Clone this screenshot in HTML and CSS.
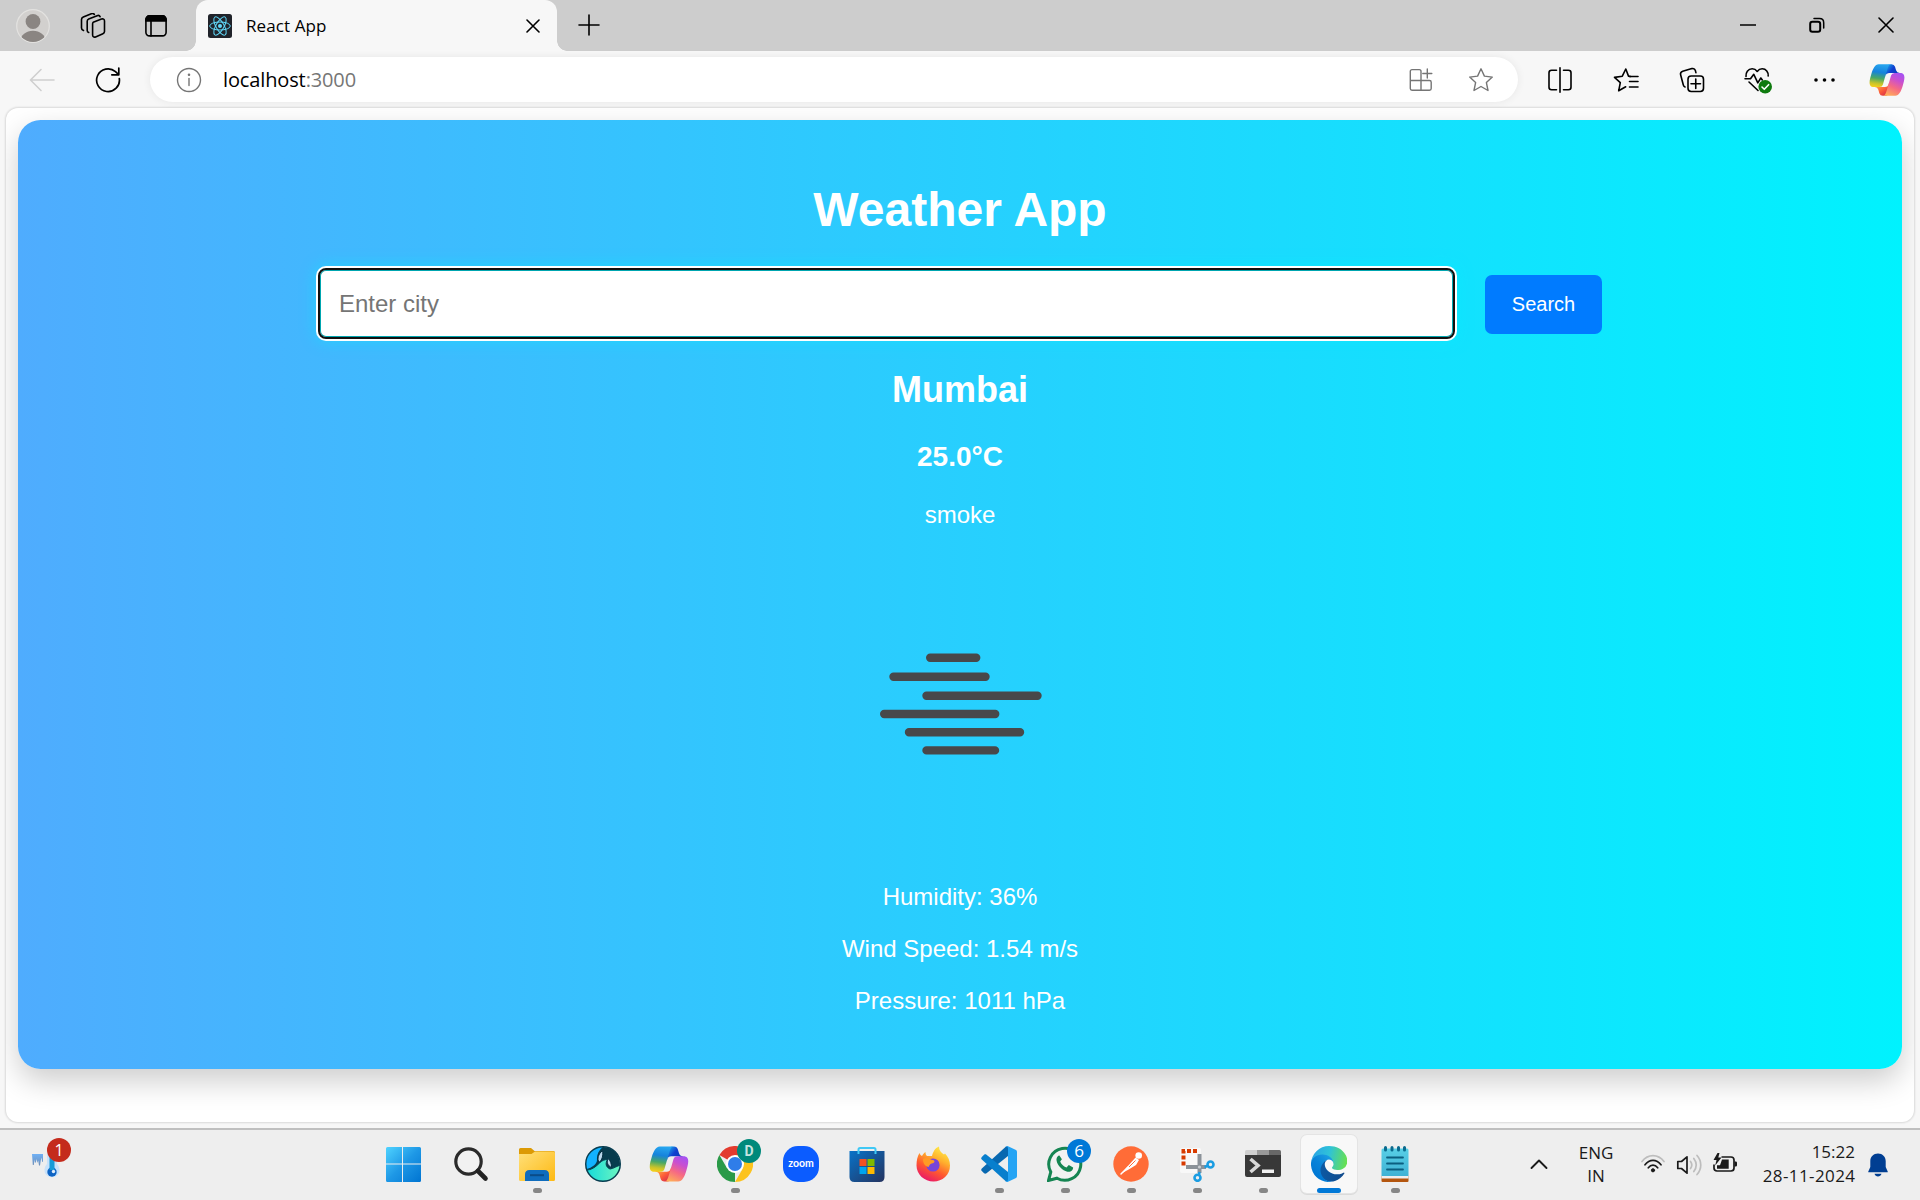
FILE: index.html
```html
<!DOCTYPE html>
<html lang="en">
<head>
<meta charset="utf-8">
<title>React App</title>
<link rel="stylesheet" href="styles.css">
</head>
<body>
<svg class="defs" width="0" height="0" aria-hidden="true">
  <defs>
    <linearGradient id="cpTop" x1="38" y1="17" x2="24" y2="6" gradientUnits="userSpaceOnUse"><stop offset="0" stop-color="#0a3bb8"/><stop offset=".55" stop-color="#0f3fd0"/><stop offset="1" stop-color="#1a9ce8"/></linearGradient>
    <linearGradient id="cpBottom" x1="13" y1="32" x2="22" y2="44" gradientUnits="userSpaceOnUse"><stop offset="0" stop-color="#ff9a3c"/><stop offset=".5" stop-color="#fb5a3a"/><stop offset="1" stop-color="#d8304a"/></linearGradient>
    <linearGradient id="cpLeft" x1="16" y1="4" x2="12" y2="33" gradientUnits="userSpaceOnUse"><stop offset="0" stop-color="#27a6ef"/><stop offset=".35" stop-color="#1683dc"/><stop offset=".62" stop-color="#48a866"/><stop offset=".85" stop-color="#c8c42a"/><stop offset="1" stop-color="#f4cf1c"/></linearGradient>
    <linearGradient id="cpRight" x1="40" y1="15" x2="26" y2="44" gradientUnits="userSpaceOnUse"><stop offset="0" stop-color="#a552f2"/><stop offset=".3" stop-color="#c94fd0"/><stop offset=".62" stop-color="#f66a83"/><stop offset="1" stop-color="#ffae58"/></linearGradient>
    <symbol id="copilot" viewBox="0 0 48 48">
      <path fill="url(#cpTop)" d="M34.142 7.325A4.63 4.63 0 0 0 29.7 4h-1.35a4.63 4.63 0 0 0-4.554 3.794L21.48 20.407l.575-1.965a4.63 4.63 0 0 1 4.444-3.33h7.853l3.294 1.282 3.175-1.283h-.926a4.63 4.63 0 0 1-4.443-3.325z"/>
      <path fill="url(#cpBottom)" d="M14.33 40.656A4.63 4.63 0 0 0 18.779 44h2.87a4.63 4.63 0 0 0 4.629-4.51l.312-12.163-.654 2.233a4.63 4.63 0 0 1-4.443 3.329h-7.919l-2.823-1.532-3.057 1.532h.912a4.63 4.63 0 0 1 4.447 3.344z"/>
      <path fill="url(#cpLeft)" d="M29.5 4H13.46c-4.583 0-7.332 6.057-9.165 12.113C2.123 23.29-.72 32.885 7.503 32.885h6.925a4.63 4.63 0 0 0 4.456-3.358c1.6-5.6 3.3-11.5 4.971-17.156.843-2.843 1.544-5.284 2.621-6.805C27.08 4.714 28.086 4 29.5 4"/>
      <path fill="url(#cpRight)" d="M18.498 44h16.04c4.582 0 7.332-6.058 9.165-12.115 2.171-7.177 5.013-16.775-3.208-16.775h-6.926a4.63 4.63 0 0 0-4.455 3.358c-1.6 5.6-3.3 11.5-4.972 17.16-.842 2.843-1.544 5.285-2.62 6.806-.604.852-1.61 1.566-3.024 1.566"/>
    </symbol>
  </defs>
</svg>

<header class="tabstrip">
  <div class="slot slot-avatar">
    <svg width="34" height="34" viewBox="0 0 34 34"><defs><clipPath id="av"><circle cx="17" cy="17" r="16"/></clipPath></defs><circle cx="17" cy="17" r="16.3" fill="#d2d0ce" stroke="#e3e2e0" stroke-width="1.2"/><circle cx="17" cy="12.5" r="7.4" fill="#8a8582"/><ellipse cx="17" cy="32" rx="12.5" ry="10.2" fill="#8a8582" clip-path="url(#av)"/></svg>
  </div>
  <div class="slot slot-work">
    <svg width="26" height="26" viewBox="0 0 26 26" class="line"><path d="M13.2 9.3l8.3-3.2c1.6-.6 3 .2 3 1.8v10.6c0 1-.6 1.800-1.600 2.200l-7.300 3.200c-1.600.7-3-.1-3-1.800V11c0-.8.2-1.300.6-1.700z"/><path d="M8.700 19.500c-1-.3-1.500-1-1.500-2V8.300c0-1 .4-1.700 1.500-2.200l8.400-3.400c1.300-.5 2.500-.1 3 1"/><path d="M3.500 17.500c-1.200-.5-2-1.300-2-2.500V6.500c0-1.200.6-2 1.800-2.500l8-3.200c1.300-.5 2.300-.2 3 .6"/></svg>
  </div>
  <div class="slot slot-vert">
    <svg width="22" height="22" viewBox="0 0 22 22" class="line"><rect x=".9" y=".9" width="20.200" height="20" rx="3.600"/><path d="M.9 6V4.500A3.600 3.600 0 0 1 4.500.9h13a3.600 3.600 0 0 1 3.600 3.600V6z" fill="#000"/><path d="M6 6v15"/></svg>
  </div>
  <div class="tab">
    <svg width="24" height="24" viewBox="0 0 24 24"><rect width="24" height="24" rx="2.500" fill="#20232a"/><g fill="none" stroke="#61dafb" stroke-width="1"><ellipse cx="12" cy="12" rx="10.300" ry="4"/><ellipse cx="12" cy="12" rx="10.300" ry="4" transform="rotate(60 12 12)"/><ellipse cx="12" cy="12" rx="10.300" ry="4" transform="rotate(120 12 12)"/></g><circle cx="12" cy="12" r="2" fill="#61dafb"/></svg>
    <span class="tab-title">React App</span>
    <svg width="14" height="14" viewBox="0 0 14 14" class="line tab-close"><path d="M1 1l12 12M13 1L1 13"/></svg>
  </div>
  <div class="slot slot-plus"><svg width="22" height="22" viewBox="0 0 22 22" class="line"><path d="M11 1v20M1 11h20"/></svg></div>
  <div class="window-buttons">
    <div class="slot"><svg width="16" height="16" viewBox="0 0 16 16" class="line"><path d="M.5 8h15"/></svg></div>
    <div class="slot"><svg width="16" height="16" viewBox="0 0 16 16" class="line strong"><rect x="1.200" y="4.800" width="10" height="10" rx="2.200"/><path d="M5 1.500h5.500c2.500 0 4.200 1.700 4.200 4.200V11" stroke-width="1.500"/></svg></div>
    <div class="slot"><svg width="16" height="16" viewBox="0 0 16 16" class="line"><path d="M1 1l14 14M15 1L1 15"/></svg></div>
  </div>
</header>

<nav class="toolbar">
  <div class="slot nav-slot"><svg width="26" height="24" viewBox="0 0 26 24" class="line faint"><path d="M25 12H1.500M12 1.500L1.500 12 12 22.500"/></svg></div>
  <div class="slot nav-slot"><svg width="26" height="26" viewBox="0 0 26 26" class="line reload"><path d="M24.300 11.500A11.400 11.400 0 1 1 20.500 4.600L23.500 7.500M23.800 1v6.800h-7"/></svg></div>
  <div class="address">
    <svg width="26" height="26" viewBox="0 0 26 26" class="line gray"><circle cx="13" cy="13" r="11.500"/><path d="M13 11.500v7"/><circle cx="13" cy="7.800" r=".6" fill="#707070"/></svg>
    <div class="url"><span>localhost</span><span class="port">:3000</span></div>
    <svg width="24" height="24" viewBox="0 0 24 24" class="line gray apps"><path d="M12 12.500V3.300c0-1-.8-1.700-1.700-1.700H3c-1 0-1.700.8-1.700 1.700v17.200c0 1 .8 1.700 1.700 1.700h17.500c1 0 1.700-.8 1.700-1.700v-6.300c0-1-.8-1.700-1.700-1.700zM1.300 12.500H12v9.700M18.300 1v9M13.800 5.500h9"/></svg>
    <svg width="26" height="26" viewBox="0 0 26 26" class="line gray fav"><path d="M13 1.800l3.400 7.300 7.900 1-5.900 5.500 1.600 7.900-7-4-7 4 1.600-7.900-5.900-5.500 7.900-1z"/></svg>
  </div>
  <div class="actions">
    <div class="slot nav-slot"><svg width="26" height="26" viewBox="0 0 26 26" class="line"><path d="M9.500 3.200H4.600c-1.500 0-2.600 1-2.600 2.500v14.600c0 1.500 1 2.500 2.600 2.500h4.900M16.500 3.200h4.900c1.500 0 2.600 1 2.600 2.500v14.600c0 1.500-1 2.500-2.600 2.500h-4.900M13 .8v24.400"/></svg></div>
    <div class="slot nav-slot"><svg width="26" height="26" viewBox="0 0 26 26" class="line"><path d="M17.500 9.500l-2-.4L12.800 2 9.300 9.200l-7.800 1.200 5.800 5.300-1.600 8.100 7-4"/><path d="M16.500 9.500H25M16.500 14.500H25M16.500 20H25"/></svg></div>
    <div class="slot nav-slot"><svg width="26" height="26" viewBox="0 0 26 26" class="line"><rect x="9" y="9" width="15.500" height="15.500" rx="3.200"/><path d="M16.750 12v9.500M12 16.750h9.500M6 20c-1-.3-1.400-.9-1.600-1.800L1.600 7.800C1.200 6 2 4.700 3.700 4.200l9.200-2.600c1.700-.4 3 .3 3.500 2l.5 2"/></svg></div>
    <div class="slot nav-slot"><svg width="28" height="28" viewBox="0 0 28 28" class="line"><path d="M2 10.500c-.5-4 2-7.700 6.200-7.700 2.300 0 3.800 1 5 2.600 1.200-1.600 2.700-2.600 5-2.600 3.800 0 6.400 3.200 6 7.200M1 12.800h5.500l3.300-4.500 4 8.500 3-4.800 1.500 2M5 16l9 8.500"/><circle cx="21.200" cy="20.800" r="6.800" fill="#0f7b0f" stroke="none"/><path d="M18 21l2.300 2.300 4.300-4.600" stroke="#fff" stroke-width="1.600"/></svg></div>
    <div class="slot nav-slot"><svg width="22" height="6" viewBox="0 0 22 6"><circle cx="3" cy="3" r="1.800"/><circle cx="11.500" cy="3" r="1.800"/><circle cx="20" cy="3" r="1.800"/></svg></div>
    <div class="slot copilot-slot"><svg width="38" height="38"><use href="#copilot"/></svg></div>
  </div>
</nav>

<main class="viewport">
  <section class="weather">
    <h1>Weather App</h1>
    <form class="search">
      <input class="city" type="text" placeholder="Enter city">
      <button class="go" type="button">Search</button>
    </form>
    <h2>Mumbai</h2>
    <p class="temp">25.0°C</p>
    <p>smoke</p>
    <svg class="condition" width="300" height="300" viewBox="0 0 300 300" stroke="#48484a" stroke-width="8.400" stroke-linecap="round"><path d="M120.200 104.700h46M83.500 123.700h92M116.500 142.700h111M74.200 161h111M99 179.300h111M116.500 197.400H185"/></svg>
    <p>Humidity: 36%</p>
    <p>Wind Speed: 1.54 m/s</p>
    <p>Pressure: 1011 hPa</p>
  </section>
</main>

<footer class="taskbar">
  <div class="widget">
    <svg width="34" height="34" viewBox="0 0 34 34"><defs><linearGradient id="ice" x1="0" y1="0" x2="0" y2="1"><stop offset="0" stop-color="#6fb0f5"/><stop offset="1" stop-color="#6f8fb8"/></linearGradient></defs><path d="M2 7h11v8l-1-.5-.3-4-.9 3-.8 5-1 .0-.8-5-.7 2.500-1-4-.5 3-1 1-.5-3.500-.7 5.500-1 0z" fill="url(#ice)"/><path d="M17 8a5 5 0 0 1 10 0v9a7.600 7.600 0 1 1-10 0z" fill="#c8e2fb"/><circle cx="22" cy="25" r="4.700" fill="#0c63c4"/><path d="M19.500 6h5v17h-5z" fill="#159bd8"/><circle cx="23.500" cy="24.500" r="1.700" fill="#dcecfb"/></svg>
    <span class="badge badge-red">1</span>
  </div>
  <div class="apps-row">
    <div class="app start"><svg width="36" height="36" viewBox="0 0 36 36"><defs><linearGradient id="win" x1="0" y1="0" x2="1" y2="1"><stop offset="0" stop-color="#4fd3ff"/><stop offset=".5" stop-color="#1e98e6"/><stop offset="1" stop-color="#0074d1"/></linearGradient></defs><path fill="url(#win)" d="M2.500 1H17v16.500H1V2.500Q1 1 2.500 1zM18 1h16.500Q36 1 36 2.500v15H18zM1 18.500h16V36H2.500Q1 36 1 34.500zM18 18.500h18v16q0 1.500-1.500 1.500H18z"/></svg></div>
    <div class="app"><svg width="36" height="36" viewBox="0 0 36 36" fill="none"><circle cx="15.500" cy="15.500" r="12.700" fill="#f1f1f1" stroke="#2a2a2a" stroke-width="3.200"/><path d="M25 25l7.500 7.500" stroke="#222" stroke-width="4.600" stroke-linecap="round"/></svg></div>
    <div class="app running"><svg width="36" height="36" viewBox="0 0 36 36"><defs><linearGradient id="fold" x1="0" y1="0" x2="1" y2="1"><stop offset="0" stop-color="#ffe07a"/><stop offset="1" stop-color="#fdb913"/></linearGradient></defs><path d="M0 3.500Q0 2 1.500 2h10.500l3.500 3H34.500Q36 5 36 6.500V20H0z" fill="#dc9a05"/><path d="M0 8h12.500L16 5.500h18.500Q36 5.500 36 7v26.500Q36 35 34.500 35h-33Q0 35 0 33.500z" fill="url(#fold)"/><path d="M6 35v-6.500Q6 24 10.500 24h15Q30 24 30 28.500V35z" fill="#0f6cbd"/><path d="M11 29.200h14" stroke="#0a4c87" stroke-width="2"/></svg></div>
    <div class="app"><svg width="36" height="36" viewBox="0 0 36 36"><defs><clipPath id="sf"><circle cx="18" cy="18" r="17"/></clipPath><linearGradient id="sfg"><stop offset="0" stop-color="#10d8dc"/><stop offset="1" stop-color="#70f7bf"/></linearGradient></defs><g clip-path="url(#sf)"><path fill="#073c4e" d="M0 0h36v36H0z"/><path d="M0 0h19C13.500 4 11.500 9 12 14c0 4-5 8-12 9.500z" fill="#12b2ff"/><path d="M17.500 4.500c-4.500 4-5.500 8-3.500 12 3-2.500 4.500-6.500 3.500-12zM23 12.500c-1.500 4-.5 7 3.500 9 0-4-1-7-3.500-9z" fill="#b9d6ea" stroke="#042d40"/><path d="M0 24c6.500.5 11-3.500 14.500-7 2.500-2.500 5-3.500 8-3.500-2.500 4-1.500 8 2.500 9.500 4-.5 6.500-3 11-4v17H0z" fill="url(#sfg)" stroke="#063f50"/></g><circle cx="18" cy="18" r="17.300" fill="none" stroke="#073d50" stroke-width="1.400"/></svg></div>
    <div class="app"><svg width="42" height="42"><use href="#copilot"/></svg></div>
    <div class="app running"><svg width="36" height="36" viewBox="0 0 36 36"><path d="M18 18L2.400 9A18 18 0 0 1 33.600 9z" fill="#e33b2e"/><path d="M18 18L18 36A18 18 0 0 1 2.400 9L10.200 22.500z" fill="#2a9a48"/><path d="M18 9h15.600A18 18 0 0 1 18 36l7.800-13.500z" fill="#fcc31e"/><circle cx="18" cy="18" r="9" fill="#fff"/><circle cx="18" cy="18" r="7" fill="#2f7de9"/></svg><span class="badge badge-teal">D</span></div>
    <div class="app"><div class="zoom">zoom</div></div>
    <div class="app"><svg width="36" height="36" viewBox="0 0 36 36"><defs><linearGradient id="st" x1="0" y1="0" x2="1" y2="1"><stop offset="0" stop-color="#0873c9"/><stop offset="1" stop-color="#25335f"/></linearGradient></defs><path d="M.5 5h35v26q0 5-5 5h-25q-5 0-5-5z" fill="url(#st)"/><path d="M9.500 8V3.500Q9.500 2 11 2h14q1.500 0 1.500 1.500V8" fill="none" stroke="#3fc8f5" stroke-width="2"/><path d="M10.500 13h7v7h-7z" fill="#f25022"/><path d="M18.500 13h7v7h-7z" fill="#7fba00"/><path d="M10.500 21h7v7h-7z" fill="#00a4ef"/><path d="M18.500 21h7v7h-7z" fill="#ffb900"/></svg></div>
    <div class="app"><svg width="36" height="36" viewBox="0 0 36 36"><defs><linearGradient id="ff" x1=".8" y1="0" x2=".3" y2="1"><stop offset="0" stop-color="#fff24a"/><stop offset=".35" stop-color="#ffb02d"/><stop offset=".65" stop-color="#ff5a2e"/><stop offset="1" stop-color="#e8146c"/></linearGradient></defs><path d="M4.500 7c.5 1.500 1.500 2.500 2.500 3 1-2 2-3 3.500-4 0 2 .5 3 1.500 4l5 0C18 6 20 2 24 .5c0 4 2 6 5 8l1-1c3 3 5 7 5 12C35 29 27.500 35.500 18.500 35.500S1.500 28.500 1.500 19.500C1.500 14.500 2.500 10 4.500 7z" fill="url(#ff)"/><circle cx="18" cy="19" r="6.600" fill="#7845d9"/><path d="M8 13c3-2 6-.5 9 1 3 0 3 2 1.500 3-3 .5-4 1.500-5 4-4-1-5.500-4-5.500-8z" fill="#ff9a24"/></svg></div>
    <div class="app running"><svg width="36" height="36" viewBox="0 0 36 36"><path d="M27 .3L27 10 5.500 27.200c-.8.600-1.700.600-2.400 0L.8 25c-.8-.8-.8-1.800 0-2.600L25 .5z" fill="#0868b0"/><path d="M27 35.700V26L5.500 8.800c-.8-.6-1.700-.6-2.400 0L.8 11c-.8.8-.8 1.800 0 2.600L25 35.500z" fill="#087fcd"/><path d="M26.500 0L35 4q1 .6 1 2v24q0 1.400-1 2l-8.500 4c-1 .2-1.500 0-2-.6 1 .6 2.500-.2 2.500-1.800V2.400C27 .8 25.500 0 24.500.6q.8-.8 2-.6z" fill="#25a4f4"/></svg></div>
    <div class="app running"><svg width="36" height="36" viewBox="0 0 36 36"><path d="M1.500 34.500l2.300-8.500A16 16 0 1 1 10 32.200z" fill="#f2f2f2" stroke="#158552" stroke-width="3"/><path d="M12.400 9.500c-.8-.1-3.400 1.500-2.800 5.200.7 4.500 6 9.800 10.700 11 3.600.8 6-1.800 5.800-4.300l-4.300-2.300-2.300 2.500c-3.200-1.300-5.200-3.300-6.300-6l1.700-2.300z" fill="#158552"/></svg><span class="badge badge-blue">6</span></div>
    <div class="app running"><svg width="36" height="36" viewBox="0 0 36 36"><circle cx="18" cy="18" r="17.700" fill="#ff6c37"/><circle cx="25.700" cy="9.500" r="3.300" fill="#fff"/><path d="M22.500 11.500l3.500 2.500-3 5-6.500 4-8 4.500 6.500-7.500z" fill="#fff"/><path d="M15.500 20.500L8 28" stroke="#fff" stroke-width="1.500" stroke-linecap="round"/><path d="M22.500 14.500l-6.500 6.500" stroke="#ff6c37" stroke-width="1"/></svg></div>
    <div class="app running"><svg width="36" height="36" viewBox="0 0 36 36"><rect x="1" y="2" width="21" height="25" rx="2" fill="#f8f8f8"/><path d="M4.500 19.500V5H18" fill="none" stroke="#d83b01" stroke-width="4" stroke-dasharray="4 2"/><path d="M20.500 8v19M7 21h20" stroke="#8b9299" stroke-width="4"/><circle cx="20.500" cy="21" r="1.600" fill="#c9cdd1"/><circle cx="18.500" cy="31.800" r="3" fill="none" stroke="#1b9de2" stroke-width="2.600"/><circle cx="31.500" cy="18.500" r="3" fill="none" stroke="#1b9de2" stroke-width="2.600"/><path d="M20 29l.5-3M28.500 20l-3 1" stroke="#1b9de2" stroke-width="2.500"/></svg></div>
    <div class="app running"><svg width="36" height="36" viewBox="0 0 36 36"><path d="M0 9h36v20q0 2-2 2H2q-2 0-2-2z" fill="#383838"/><path d="M0 9V5.500Q0 4 1.500 4H12v5z" fill="#cfcfcf"/><path d="M12 4h12v5H12z" fill="#999"/><path d="M24 4h10.500Q36 4 36 5.500V9H24z" fill="#686868"/><path d="M5.500 13l7.500 6.500L5.500 26" fill="none" stroke="#d9d9d9" stroke-width="3.600"/><path d="M17 23.500h12V27H17z" fill="#f0f0f0"/></svg></div>
    <div class="app active"><svg width="36" height="36" viewBox="0 0 256 256"><defs><linearGradient id="eg1" x1="63" y1="177" x2="241" y2="177" gradientUnits="userSpaceOnUse"><stop offset="0" stop-color="#0c59a4"/><stop offset="1" stop-color="#114a8b"/></linearGradient><linearGradient id="eg2" x1="157" y1="99" x2="46" y2="221" gradientUnits="userSpaceOnUse"><stop offset="0" stop-color="#1b9de2"/><stop offset=".5" stop-color="#0883d9"/><stop offset="1" stop-color="#0078d4"/></linearGradient><linearGradient id="eg3" x1="20" y1="60" x2="250" y2="110" gradientUnits="userSpaceOnUse"><stop offset="0" stop-color="#2aa8e4"/><stop offset=".45" stop-color="#2fc2d8"/><stop offset="1" stop-color="#66e052"/></linearGradient></defs><path fill="url(#eg1)" d="M231 190.500c-3.400 1.800-6.900 3.400-10.500 4.700a101 101 0 0 1-35.500 6.400c-46.700 0-87.500-32.100-87.500-73.500a31.400 31.400 0 0 1 16.400-27.300c-42.300 1.800-53.200 45.900-53.200 71.700 0 73.200 67.400 80.600 81.900 80.600 7.800 0 19.600-2.300 26.700-4.500l1.300-.4a128 128 0 0 0 66.600-52.800 4 4 0 0 0-6.200-4.900z"/><path fill="url(#eg2)" d="M105.700 241.400A79 79 0 0 1 83 220.100a80.700 80.700 0 0 1 29.500-120c3.200-1.500 8.400-4.100 15.500-4a32 32 0 0 1 25.400 13c4.100 5.600 6.300 12.100 6.300 18.700 0-.3 24.500-79.600-80-79.600-43.900 0-80 41.700-80 78.200-.2 19.300 4 38.500 12.100 56a128 128 0 0 0 156.400 67.100 75.500 75.500 0 0 1-62.500-8.100z"/><path fill="url(#eg3)" d="M152.300 148.900c-.8 1-3.300 2.500-3.300 5.700 0 2.600 1.700 5.200 4.800 7.300 14.700 10.200 42.300 8.900 42.400 8.900a60.700 60.700 0 0 0 30.900-8.500 62.700 62.700 0 0 0 30.900-53.900c.3-22.600-8-37.500-11.400-44.200C225.300 22.500 179 0 128.300 0a128 128 0 0 0-128 126.200c.5-36.500 36.800-66 80-66 3.500 0 23.500.3 42 10 16.300 8.600 24.900 19 30.800 29.200 6.200 10.700 7.300 24.100 7.300 29.500 0 5.300-2.700 13.300-8.100 20z"/></svg></div>
    <div class="app running"><svg width="36" height="36" viewBox="0 0 36 36"><defs><linearGradient id="np" x1="0" y1="0" x2="0" y2="1"><stop offset="0" stop-color="#58cfe6"/><stop offset="1" stop-color="#3fb2d4"/></linearGradient></defs><path d="M4.500 30h27v5q0 1-1 1h-25q-1 0-1-1z" fill="#b4560f"/><path d="M4.500 27h27v5.500h-27z" fill="#eee"/><path d="M6 2.500h24Q31.500 2.500 31.500 4v26h-27V4Q4.500 2.500 6 2.500z" fill="url(#np)"/><path d="M10 11.500h16M10 17.500h16M10 23.500h16" stroke="#0b5f80" stroke-width="1.800" stroke-linecap="round"/><path d="M8.500 1.500v2.500M15 1.500v2.500M21.500 1.500v2.500M27.500 1.500v2.500" stroke="#0a6a8e" stroke-width="3" stroke-linecap="round"/></svg></div>
  </div>
  <div class="tray">
    <svg width="18" height="12" viewBox="0 0 18 12" class="line tray-line"><path d="M1.500 10L9 2.500l7.500 7.500"/></svg>
    <div class="lang"><span>ENG</span><span>IN</span></div>
    <svg class="wifi" width="24" height="20" viewBox="0 0 24 20" fill="none" stroke="#1a1a1a" stroke-width="1.700" stroke-linecap="round"><path d="M1 7.500C7-.3 17-.3 23 7.500" stroke="#bdbdbd"/><path d="M4 10.800c4.500-6 11.500-6 16 0M7.300 13.800c2.700-3.500 6.700-3.500 9.400 0"/><circle cx="12" cy="16.300" r="1.600" fill="#1a1a1a" stroke-width="1"/></svg>
    <svg class="sound" width="26" height="22" viewBox="0 0 26 22" fill="none" stroke="#1a1a1a" stroke-width="1.700" stroke-linejoin="round"><path d="M1.800 7.500h3.700L11 2.800v16.400l-5.500-4.700H1.800z"/><path d="M14.500 7.500c1.500 2 1.500 5 0 7M17.800 4.500c3 4 3 9 0 13M21 1.500c5 5.500 5 13.500 0 19" stroke="#bdbdbd" stroke-linecap="round"/></svg>
    <svg class="battery" width="26" height="22" viewBox="0 0 26 22"><path d="M9.500 5H19q3 0 3 3v8q0 3-3 3H5q-3 0-3-3v-3.500" fill="none" stroke="#1a1a1a" stroke-width="1.700"/><path d="M10 7.500h6.700v9.300H5v-3.500h3z" fill="#1a1a1a"/><path d="M22.500 9.500h1.200q1.300 0 1.300 1.300v2.400q0 1.300-1.300 1.300h-1.200zM5.500 1L1.500 8h3L3.200 13.500 9.500 5.500H6.300L7.500 1z" fill="#1a1a1a"/></svg>
    <div class="clock"><span>15:22</span><span class="date">28-11-2024</span></div>
    <svg class="bell" width="20" height="24" viewBox="0 0 20 24" fill="#003e92"><path d="M10 .5c4.500 0 7.700 3.300 7.700 7.600v6l2 4.300c.2.500 0 .9-.6.9H.9c-.6 0-.8-.4-.6-.9l2-4.300v-6C2.300 3.800 5.500.5 10 .5zM6.500 20.800h7c-.5 1.700-1.900 2.600-3.500 2.600s-3-.9-3.500-2.600z"/></svg>
  </div>
</footer>
</body>
</html>
```
FILE: styles.css
```css
* { box-sizing: border-box; }
body {
  margin: 0;
  width: 1920px;
  height: 1200px;
  display: flex;
  flex-direction: column;
  overflow: hidden;
  background: #f7f7f7;
  font-family: "Open Sans", "Noto Sans", sans-serif;
  color: #000;
}
.defs { position: absolute; }
svg { display: block; flex: none; }
.slot { display: flex; align-items: center; justify-content: center; flex: none; }
.line { fill: none; stroke: #000; stroke-width: 1.6; stroke-linecap: round; stroke-linejoin: round; }
.line.strong { stroke-width: 2; }
.line.gray { stroke: #757575; stroke-width: 1.4; }
.line.faint { stroke: #cfcfcf; }
.line.reload { stroke-width: 1.7; }

/* Tab strip */
.tabstrip { height: 51px; flex: none; display: flex; background: #cdcdcd; }
.slot-avatar { width: 66px; padding-top: 1px; }
.slot-work { width: 54px; }
.slot-vert { width: 72px; }
.slot-plus { width: 64px; padding-bottom: 2px; }
.tab {
  position: relative;
  width: 361px;
  margin-left: 4px;
  padding: 1px 17px 0 12px;
  display: flex;
  align-items: center;
  background: #f7f7f7;
  border-radius: 12px 12px 0 0;
}
.tab::before, .tab::after {
  content: "";
  position: absolute;
  bottom: 0;
  width: 10px;
  height: 10px;
}
.tab::before { left: -10px; background: radial-gradient(circle at 0 0, transparent 9.5px, #f7f7f7 10px); }
.tab::after { right: -10px; background: radial-gradient(circle at 100% 0, transparent 9.5px, #f7f7f7 10px); }
.tab-title { margin: -1px 0 0 14px; font-size: 17px; letter-spacing: .1px; }
.tab-close { margin-left: auto; }
.window-buttons { margin-left: auto; display: flex; }
.window-buttons .slot { width: 69px; padding-bottom: 1px; }

/* Address bar and browser buttons */
.toolbar { height: 57px; flex: none; display: flex; align-items: center; padding-left: 9px; }
.nav-slot { width: 66px; }
.copilot-slot { width: 60px; }
.address {
  width: 1368px;
  height: 45px;
  margin: 0 8.5px 0 9px;
  padding: 0 24.5px 0 26px;
  display: flex;
  align-items: center;
  background: #fff;
  border-radius: 23px;
  box-shadow: 0 0 8px rgba(0, 0, 0, .07);
}
.url { margin-left: 21px; font-size: 20px; line-height: 28px; letter-spacing: -.13px; }
.port { color: #767676; }
.apps { margin-left: auto; }
.fav { margin-left: 35px; }
.actions { display: flex; align-items: center; }

/* Page */
.viewport {
  height: 1014px;
  flex: none;
  margin: 0 6px;
  padding: 12px;
  background: #fff;
  border-radius: 12px;
  box-shadow: 0 0 2px 1px rgba(0, 0, 0, .12);
  overflow: hidden;
  font-family: "Liberation Sans", Arial, sans-serif;
}
.weather {
  height: 949px;
  padding: 62px 300px 0;
  display: flex;
  flex-direction: column;
  color: #fff;
  text-align: center;
  border-radius: 22.5px;
  background: linear-gradient(to right, #4facfe, #00f2fe);
  box-shadow: 0 12px 30px rgba(0, 0, 0, .2);
}
.weather h1 { margin: 0 0 29px; font-size: 48px; line-height: 56px; }
.weather h2 { margin: 0 0 30px; font-size: 36px; line-height: 42px; }
.weather p { margin: 0 0 24px; font-size: 24px; line-height: 28px; }
.weather .temp { margin-bottom: 28px; font-size: 28px; line-height: 32px; font-weight: bold; }
.condition { align-self: center; margin-bottom: 30px; }
.search { height: 74px; margin: 0 0 28px; display: flex; align-items: center; gap: 30px; }
.city {
  flex: 1;
  height: 71px;
  margin: 0 0 1px;
  padding: 1px 19px 0;
  font: 24px "Liberation Sans", Arial, sans-serif;
  background: #fff;
  border: 2.5px solid #101010;
  border-radius: 8px;
  outline: none;
  box-shadow: 0 0 0 2px #fff, 0 0 15px 3px rgba(0, 242, 254, .4), inset 0 0 0 1px #00a6b0;
}
.city::placeholder { color: #757575; opacity: 1; }
.go {
  width: 117px;
  height: 59px;
  margin: 1px 0 0;
  padding: 0;
  border: 0;
  border-radius: 7px;
  background: #007bff;
  color: #fff;
  font: 20px "Liberation Sans", Arial, sans-serif;
}

/* Taskbar */
.taskbar {
  height: 72px;
  flex: none;
  margin-top: auto;
  display: flex;
  align-items: stretch;
  background: #eee;
  border-top: 2px solid #bfbfbf;
}
.widget { position: relative; width: 370px; padding: 17px 0 0 30px; }
.badge {
  position: absolute;
  width: 24px;
  height: 24px;
  border-radius: 50%;
  color: #fff;
  font-size: 17px;
  line-height: 24px;
  text-align: center;
}
.badge-red { left: 47px; top: 8px; background: #c42b1c; font-size: 16px; }
.badge-teal { right: 7px; top: 9px; background: #00897b; color: #c5e4e0; font: bold 14px/24px Roboto, sans-serif; }
.badge-blue { right: 7px; top: 9px; background: #0078d7; }
.apps-row { display: flex; }
.app { position: relative; width: 66px; display: flex; align-items: center; justify-content: center; padding-bottom: 2px; }
.app.start { width: 68px; padding-right: 2px; }
.app svg, .zoom { position: relative; }
.running::after, .active::after {
  content: "";
  position: absolute;
  left: 28.5px;
  top: 58px;
  width: 9px;
  height: 5px;
  border-radius: 2.5px;
  background: #868686;
}
.active::after { left: 21px; width: 24px; background: #0078d7; }
.active::before {
  content: "";
  position: absolute;
  inset: 5px 5px 7px 5px;
  border-radius: 6px;
  background: #f8f8f8;
  box-shadow: 0 0 0 1px #e4e4e4, 0 1px 0 1px #dadada;
}
.zoom {
  width: 36px;
  height: 36px;
  border-radius: 15px;
  background: #0b5cff;
  color: #fff;
  font: bold 10.5px/34px Lato, sans-serif;
  text-align: center;
}
.tray { margin-left: auto; display: flex; align-items: center; padding: 0 32px 2px 0; color: #1a1a1a; font-size: 17px; line-height: 24px; }
.tray-line { stroke: #1a1a1a; stroke-width: 1.9; }
.lang, .clock { display: flex; flex-direction: column; }
.lang { width: 36px; margin-left: 30px; align-items: center; line-height: 23px; }
.wifi { margin-left: 27px; }
.sound { margin-left: 11px; margin-top: 2px; }
.battery { margin-left: 10px; margin-top: -2px; }
.clock { width: 96px; margin-left: 21px; align-items: flex-end; white-space: nowrap; }
.date { letter-spacing: .4px; margin-right: -.4px; }
.bell { margin-left: 13px; margin-top: 2px; }
```
